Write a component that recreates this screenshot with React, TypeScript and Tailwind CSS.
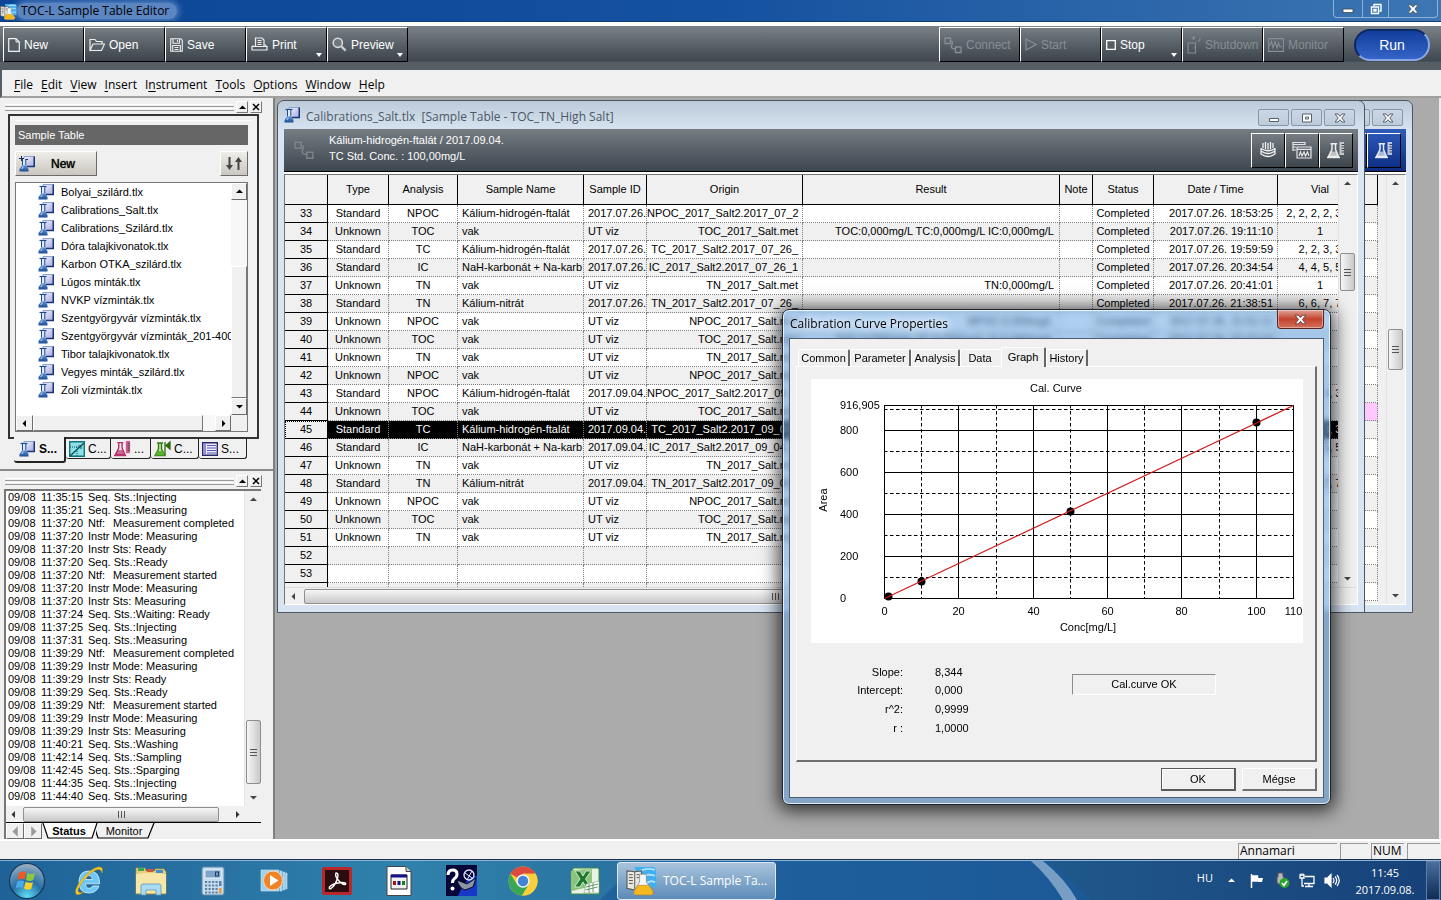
import { useState, type ReactNode } from "react";
import clsx from "clsx";

const SEGOE = "font-['Open_Sans','Noto_Sans',sans-serif]";

/* ---------- data ---------- */

type Row = { n: number; type?: string; an?: string; name?: string; id?: string; origin?: string; result?: string; status?: string; date?: string; vial?: string };

const ROWS: Row[] = [
  { n: 33, type: "Standard", an: "NPOC", name: "Kálium-hidrogén-ftalát", id: "2017.07.26.", origin: "NPOC_2017_Salt2.2017_07_2", status: "Completed", date: "2017.07.26. 18:53:25", vial: "2, 2, 2, 2, 3, 3" },
  { n: 34, type: "Unknown", an: "TOC", name: "vak", id: "UT viz", origin: "TOC_2017_Salt.met", result: "TOC:0,000mg/L TC:0,000mg/L IC:0,000mg/L", status: "Completed", date: "2017.07.26. 19:11:10", vial: "1" },
  { n: 35, type: "Standard", an: "TC", name: "Kálium-hidrogén-ftalát", id: "2017.07.26.", origin: "TC_2017_Salt2.2017_07_26_", status: "Completed", date: "2017.07.26. 19:59:59", vial: "2, 2, 3, 3" },
  { n: 36, type: "Standard", an: "IC", name: "NaH-karbonát + Na-karb", id: "2017.07.26.", origin: "IC_2017_Salt2.2017_07_26_1", status: "Completed", date: "2017.07.26. 20:34:54", vial: "4, 4, 5, 5" },
  { n: 37, type: "Unknown", an: "TN", name: "vak", id: "UT viz", origin: "TN_2017_Salt.met", result: "TN:0,000mg/L", status: "Completed", date: "2017.07.26. 20:41:01", vial: "1" },
  { n: 38, type: "Standard", an: "TN", name: "Kálium-nitrát", id: "2017.07.26.", origin: "TN_2017_Salt2.2017_07_26_", status: "Completed", date: "2017.07.26. 21:38:51", vial: "6, 6, 7, 7" },
  { n: 39, type: "Unknown", an: "NPOC", name: "vak", id: "UT viz", origin: "NPOC_2017_Salt.met", result: "NPOC:0,000mg/L", status: "Completed", date: "2017.07.26. 21:51:11" },
  { n: 40, type: "Unknown", an: "TOC", name: "vak", id: "UT viz", origin: "TOC_2017_Salt.met", result: "TOC:0,000mg/L TC:0,000mg/L IC:0,000mg/L", status: "Completed", date: "2017.07.26. 22:10:24" },
  { n: 41, type: "Unknown", an: "TN", name: "vak", id: "UT viz", origin: "TN_2017_Salt.met" },
  { n: 42, type: "Unknown", an: "NPOC", name: "vak", id: "UT viz", origin: "NPOC_2017_Salt.met" },
  { n: 43, type: "Standard", an: "NPOC", name: "Kálium-hidrogén-ftalát", id: "2017.09.04.", origin: "NPOC_2017_Salt2.2017_09_0", vial: "2, 2, 3, 3" },
  { n: 44, type: "Unknown", an: "TOC", name: "vak", id: "UT viz", origin: "TOC_2017_Salt.met" },
  { n: 45, type: "Standard", an: "TC", name: "Kálium-hidrogén-ftalát", id: "2017.09.04.", origin: "TC_2017_Salt2.2017_09_04_", vial: "2, 2, 3, 3" },
  { n: 46, type: "Standard", an: "IC", name: "NaH-karbonát + Na-karb", id: "2017.09.04.", origin: "IC_2017_Salt2.2017_09_04_1", vial: "4, 4, 5, 5" },
  { n: 47, type: "Unknown", an: "TN", name: "vak", id: "UT viz", origin: "TN_2017_Salt.met" },
  { n: 48, type: "Standard", an: "TN", name: "Kálium-nitrát", id: "2017.09.04.", origin: "TN_2017_Salt2.2017_09_04_", vial: "6, 6, 7, 7" },
  { n: 49, type: "Unknown", an: "NPOC", name: "vak", id: "UT viz", origin: "NPOC_2017_Salt.met" },
  { n: 50, type: "Unknown", an: "TOC", name: "vak", id: "UT viz", origin: "TOC_2017_Salt.met" },
  { n: 51, type: "Unknown", an: "TN", name: "vak", id: "UT viz", origin: "TN_2017_Salt.met" },
  { n: 52 },
  { n: 53 },
];

const FILES = [
  "Bolyai_szilárd.tlx", "Calibrations_Salt.tlx", "Calibrations_Szilárd.tlx", "Dóra talajkivonatok.tlx",
  "Karbon OTKA_szilárd.tlx", "Lúgos minták.tlx", "NVKP vízminták.tlx", "Szentgyörgyvár vízminták.tlx",
  "Szentgyörgyvár vízminták_201-400.tlx", "Tibor talajkivonatok.tlx", "Vegyes minták_szilárd.tlx", "Zoli vízminták.tlx",
];

const LOG: [string, string, string?][] = [
  ["11:35:15", "Seq. Sts.:Injecting"], ["11:35:21", "Seq. Sts.:Measuring"], ["11:37:20", "Ntf:", "Measurement completed"],
  ["11:37:20", "Instr Mode: Measuring"], ["11:37:20", "Instr Sts: Ready"], ["11:37:20", "Seq. Sts.:Ready"],
  ["11:37:20", "Ntf:", "Measurement started"], ["11:37:20", "Instr Mode: Measuring"], ["11:37:20", "Instr Sts: Measuring"],
  ["11:37:24", "Seq. Sts.:Waiting: Ready"], ["11:37:25", "Seq. Sts.:Injecting"], ["11:37:31", "Seq. Sts.:Measuring"],
  ["11:39:29", "Ntf:", "Measurement completed"], ["11:39:29", "Instr Mode: Measuring"], ["11:39:29", "Instr Sts: Ready"],
  ["11:39:29", "Seq. Sts.:Ready"], ["11:39:29", "Ntf:", "Measurement started"], ["11:39:29", "Instr Mode: Measuring"],
  ["11:39:29", "Instr Sts: Measuring"], ["11:40:21", "Seq. Sts.:Washing"], ["11:42:14", "Seq. Sts.:Sampling"],
  ["11:42:45", "Seq. Sts.:Sparging"], ["11:44:35", "Seq. Sts.:Injecting"], ["11:44:40", "Seq. Sts.:Measuring"],
];

/* ---------- small icons ---------- */

function FlaskDoc({ plus = false }: { plus?: boolean }) {
  return (
    <svg width="16" height="16" viewBox="0 0 16 16" className="shrink-0">
      <defs>
        <linearGradient id="fdA" x1="0" y1="0" x2="1" y2="1"><stop offset="0" stopColor="#f4f4ff" /><stop offset="1" stopColor="#a3a8dc" /></linearGradient>
        <linearGradient id="fdB" x1="0" y1="0" x2="0" y2="1"><stop offset="0" stopColor="#5f93d8" /><stop offset="1" stopColor="#1b4a90" /></linearGradient>
      </defs>
      <path d="M5 .5h10.500v10H5z" fill="url(#fdA)" stroke="#8ba5d6" />
      <path d="M15.300.500v10H8" fill="none" stroke="#1a3478" strokeWidth="1.600" />
      {plus ? <path d="M2.500 0v5M0 2.500h5M5 3.500h4" stroke="#1b2c55" /> : <path d="M1.500 2.500h7" stroke="#1d4c93" strokeWidth="1.200" />}
      <path d="M3.800 3v6.500h2.700V3z" fill="#dcebfa" />
      <path d="M3.500 3v6.500M6.800 3v6.500" stroke="#1d4c93" />
      <path d="M3.200 9.500h4L9.500 13v2.600H.5V13z" fill="url(#fdB)" />
      <path d="M2 12.500l2-2h1l-1.500 2.500z" fill="#a9caf3" />
    </svg>
  );
}

function BookFlask({ size = 18 }: { size?: number }) {
  return (
    <svg width={size} height={size} viewBox="0 0 32 32" className="shrink-0">
      <path d="M9 2h20l2 2v19H15z" fill="#3fb0ee" />
      <path d="M12 8q8-6 18-3M13 14q7-6 17-3M20 20q5-5 10-2" stroke="#a9e2ff" strokeWidth="2" fill="none" />
      <path d="M1 6l8 1 7-1v18l-7 2-8-2z" fill="#e9e7e0" stroke="#5b5b5b" strokeWidth="1.200" />
      <path d="M9 7v18M3 10h4M3 13h4M3 16h4M3 19h4M11 10h3M11 13h3" stroke="#555" />
      <path d="M14 9.500h7v8l6.500 9q1.500 4-2 4.500H10.500q-4-.5-2-4.500l5.500-9z" fill="#f4f6f8" stroke="#888" strokeWidth=".8" />
      <path d="M12.500 21h11l4.300 6q.8 3.500-2 3.800H10.500q-3-.3-2-3.800z" fill="#f4b91c" stroke="#b7820a" strokeWidth=".6" />
    </svg>
  );
}

function FlaskRuler({ color, ruler, w = 18 }: { color: string; ruler: string; w?: number }) {
  return (
    <svg width={w} height={w} viewBox="0 0 18 18" className="shrink-0">
      <path d="M3.500 2.800h6.500M5 3v5.500L1.500 15.500h10L8.500 8.500V3" fill="none" stroke={color} strokeWidth="1.500" />
      <path d="M4.500 10.500H9l2.500 5h-10z" fill={color} opacity=".7" />
      <path d="M0 16.500h13" stroke={color} strokeWidth="1.400" />
      <path d="M12.500 1H17v13h-4.500z" fill={ruler} opacity=".85" />
      <path d="M14.500 3.500H17M14.500 6H17M14.500 8.500H17M14.500 11H17" stroke="#3b434a" />
    </svg>
  );
}

function Nodes({ size = 18 }: { size?: number }) {
  return (
    <svg width={size} height={size} viewBox="0 0 18 18" fill="none" stroke="currentColor" strokeWidth="1.300">
      <path d="M1 2h5.500v5.500H1zM11.500 11H17v5.500h-5.500zM6.500 5q3 .5 1.500 3.500t.5 4l3 .8" />
    </svg>
  );
}

const TB = {
  New: <svg width="12" height="14" viewBox="0 0 12 14"><path d="M.7.7h7.300l3.300 3.300v9.300H.7z" fill="#555d65" stroke="#f2f2f2" strokeWidth="1.200" /><path d="M8 .7v3.300h3.300" stroke="#f2f2f2" fill="none" /></svg>,
  Open: <svg width="16" height="14" viewBox="0 0 16 14"><path d="M1 12.500V1.500h5l1.500 2H13v2.500M1 12.500L4 6h11.500l-3 6.500z" fill="#59616a" stroke="#eee" strokeWidth="1.200" /></svg>,
  Save: <svg width="13" height="14" viewBox="0 0 13 14"><path d="M.7.7h10l1.600 1.600v11H.7zM3 .7v4.500h6.500V.7M2.700 13.300V7.500h7.600v5.800M4.500 9.500h4M4.500 11.500h4M7.500 2v2" fill="none" stroke="#eee" strokeWidth="1.100" /></svg>,
  Print: <svg width="17" height="15" viewBox="0 0 17 15"><path d="M4.500 9.500V1h6.500l2 2v6.500M6.500 3.500h4M6.500 5.500h4M6.500 7.500h4M1 9.500h15v3.500H1zM2.500 8.500l-1 1M15.500 9.500l-1.500-2" fill="none" stroke="#eee" strokeWidth="1.200" /></svg>,
  Preview: <svg width="15" height="15" viewBox="0 0 15 15"><circle cx="5.800" cy="5.800" r="4.600" fill="#6f777f" stroke="#ddd" strokeWidth="1.500" /><path d="M9.300 9.300l4.400 4.400" stroke="#ccc" strokeWidth="2.400" /></svg>,
  Connect: <Nodes />,
  Start: <svg width="12" height="13" viewBox="0 0 12 13"><path d="M1 1l10 5.500L1 12z" fill="none" stroke="currentColor" strokeWidth="1.200" /></svg>,
  Stop: <svg width="10" height="10" viewBox="0 0 10 10"><path d="M.7.700h8.600v8.600H.7z" fill="#555d65" stroke="#fff" strokeWidth="1.300" /></svg>,
  Shutdown: <svg width="14" height="19" viewBox="0 0 14 19" fill="none" stroke="currentColor" strokeWidth="1.100"><path d="M1 8h7.500v10H1zM6.500 13h1M6.500 1v4M4.500 3h4" /><path d="M12.500 1q1.500 4-3.500 6 4.500 0 4.500-3.500z" fill="currentColor" stroke="none" /></svg>,
  Monitor: <svg width="16" height="14" viewBox="0 0 16 14" fill="none" stroke="currentColor" strokeWidth="1.100"><path d="M.6.6h14.800v12.800H.6zM1.500 8l2-4.500L5 10l2-6.500L9 10l1.500-5L12 9l2-1" /></svg>,
};

/* ---------- chrome pieces ---------- */

function ToolButton({ name, dim, arrow }: { name: keyof typeof TB; dim?: boolean; arrow?: boolean }) {
  return (
    <button
      disabled={dim}
      className={clsx(
        "relative flex h-[35px] w-[81px] shrink-0 items-center gap-1 border-t border-r border-b border-l border-t-white border-r-black border-b-black border-l-white bg-linear-to-b from-[#767e84] to-[#3c444c] pl-1 text-xs",
        dim ? "text-[#878f94]" : "text-white",
      )}
    >
      {TB[name]}
      {name}
      {arrow ? <span className="absolute right-1 bottom-1 border-x-[3px] border-t-4 border-x-transparent border-t-white" /> : null}
    </button>
  );
}

function Arrow({ dir, className }: { dir: "up" | "down" | "left" | "right"; className?: string }) {
  const d = { up: "M1 6h7L4.500 2.500z", down: "M1 3h7L4.500 6.500z", left: "M6 1v7L2.500 4.500z", right: "M3 1v7l3.500-3.500z" }[dir];
  return <svg width="9" height="9" viewBox="0 0 9 9" className={clsx("shrink-0", className)}><path d={d} fill="currentColor" /></svg>;
}

// Aero-style scroll bars; the caller gives the thumb's place and length.
function VScroll({ thumb, className }: { thumb: string; className?: string }) {
  return (
    <div className={clsx("flex w-[17px] shrink-0 flex-col items-center justify-between border-l border-[#e4e4e4] bg-[#f0f0f0] py-1 text-[#444]", className)}>
      <Arrow dir="up" />
      <div className="flex w-full flex-1 flex-col items-center">
        <div className={clsx("flex w-[15px] flex-col items-center justify-center gap-[2px] rounded-[2px] border border-[#8f8f8f] bg-linear-to-r from-[#f6f6f6] to-[#c9c9cb]", thumb)}>
          <i className="h-px w-[7px] bg-[#555]" /><i className="h-px w-[7px] bg-[#555]" /><i className="h-px w-[7px] bg-[#555]" />
        </div>
      </div>
      <Arrow dir="down" />
    </div>
  );
}

function HThumb({ className }: { className: string }) {
  return (
    <div className={clsx("flex h-[15px] items-center justify-center gap-[2px] rounded-[2px] border border-[#8f8f8f] bg-linear-to-b from-[#f6f6f6] to-[#c9c9cb]", className)}>
      <i className="h-[7px] w-px bg-[#555]" /><i className="h-[7px] w-px bg-[#555]" /><i className="h-[7px] w-px bg-[#555]" />
    </div>
  );
}

function Gripper() {
  return (
    <div className="flex h-[14px] items-center gap-[2px] pr-[11px] pl-[5px]">
      <div className="flex flex-1 flex-col gap-px">
        <i className="h-[3px] border-t border-b border-t-white border-b-[#9a9a9a]" />
        <i className="h-[3px] border-t border-b border-t-white border-b-[#9a9a9a]" />
      </div>
      <button aria-label="Collapse" className="flex h-3 w-3 items-center justify-center border border-t-white border-r-[#777] border-b-[#777] border-l-white"><Arrow dir="up" /></button>
      <button aria-label="Close" className="flex h-3 w-3 items-center justify-center border border-t-white border-r-[#777] border-b-[#777] border-l-white">
        <svg width="8" height="8" viewBox="0 0 8 8"><path d="M1 1l6 6M7 1L1 7" stroke="#000" strokeWidth="1.500" /></svg>
      </button>
    </div>
  );
}

function Raised({ children, className, label }: { children?: ReactNode; className?: string; label?: string }) {
  return (
    <button aria-label={label} className={clsx("flex items-center border border-t-white border-r-[#6b6b6b] border-b-[#6b6b6b] border-l-white", className)}>{children}</button>
  );
}

/* ---------- left dock ---------- */

const DOCK_TABS: { label: string; icon: ReactNode; w: string }[] = [
  { label: "C...", w: "w-[45px]", icon: <svg width="16" height="16" viewBox="0 0 16 16"><path d="M.7.700h14.600v14.600H.7z" fill="#8fe0e6" stroke="#11737d" strokeWidth="1.400" /><path d="M1 15L15 2" stroke="#0d5560" strokeWidth="1.500" /><path d="M1 6h7M8 6v9" stroke="#0d5560" strokeDasharray="1 1" /><path d="M9 5h3v3" stroke="#0d5560" fill="none" /></svg> },
  { label: "...", w: "w-[40px]", icon: <FlaskRuler color="#b5326e" ruler="#d0447f" w={17} /> },
  { label: "C...", w: "w-[48px]", icon: <svg width="17" height="18" viewBox="0 0 17 18"><path d="M3 3h6M4.500 3v6L1 15.500h10L7.500 9V3" fill="#c8eaa4" stroke="#2f7d14" strokeWidth="1.400" /><path d="M3 11h6l2 4.500H1z" fill="#5cb02c" /><path d="M11 2v13M16 2v7l-4-3.500z" fill="#2b6b12" stroke="#2b6b12" strokeWidth="1.300" /></svg> },
  { label: "S...", w: "w-[48px]", icon: <svg width="16" height="14" viewBox="0 0 16 14"><path d="M.7.700h14.600v12.600H.7z" fill="#eceafb" stroke="#28286c" strokeWidth="1.400" /><path d="M1.400 1.400h2.600v11.200H1.400z" fill="#8f8fd0" /><path d="M5 3.500h9M5 6h9M5 8.500h9M5 11h9" stroke="#5a5ab0" /></svg> },
];

function SampleTableDock() {
  return (
    <section className="flex flex-col pt-[2px]">
      <Gripper />
      <div className="mr-[14px] ml-2 border-2 border-[#333] px-[5px] pt-1 pb-[5px]">
        <div className="border-t border-white" />
        <h2 className="mt-1 mr-1 flex h-5 items-center bg-[#666] pl-[3px] text-[11px] text-white">Sample Table</h2>
        <div className="mt-[6px] mr-1 flex justify-between">
          <Raised className="h-[25px] w-[82px] bg-linear-to-b from-[#efede8] to-[#c9c7bf] pl-[3px] text-xs [text-shadow:0_0_1px_#000]">
            <FlaskDoc plus /><span className="ml-4">New</span>
          </Raised>
          <Raised label="Sort" className="h-[25px] w-[28px] justify-center bg-linear-to-b from-[#efede8] to-[#c9c7bf]">
            <svg width="18" height="15" viewBox="0 0 18 15" fill="#444"><path d="M3.500 1h2v8h2.500l-3.500 5L1 9h2.500zM12.500 14h2V6H17l-3.500-5L10 6h2.500z" /></svg>
          </Raised>
        </div>
        <div className="mt-[6px] mr-1 border border-[#777]">
          <div className="flex h-[232px] bg-white">
            <ul className="min-w-0 flex-1 overflow-hidden text-[11px] text-black">
              {FILES.map((f) => (
                <li key={f} className="flex h-[18px] items-center gap-[7px] pl-[22px] whitespace-nowrap"><FlaskDoc />{f}</li>
              ))}
            </ul>
            <div className="flex w-4 flex-col bg-[#f7f7f7]">
              <Raised label="Up" className="h-[17px] justify-center bg-[#f0f0f0]"><Arrow dir="up" /></Raised>
              <div className="mt-[66px] flex-1 border border-t-white border-r-[#777] border-b-[#777] border-l-white bg-[#f0f0f0]" />
              <Raised label="Down" className="h-[17px] justify-center bg-[#f0f0f0]"><Arrow dir="down" /></Raised>
            </div>
          </div>
          <div className="flex h-4 bg-[#f7f7f7]">
            <Raised label="Left" className="w-[17px] justify-center bg-[#f0f0f0]"><Arrow dir="left" /></Raised>
            <div className="w-[170px] border border-t-white border-r-[#777] border-b-[#777] border-l-white bg-[#f0f0f0]" />
            <div className="flex-1" />
            <Raised label="Right" className="w-4 justify-center bg-[#f0f0f0]"><Arrow dir="right" /></Raised>
            <div className="w-4 bg-[#f0f0f0]" />
          </div>
        </div>
      </div>
      <div className="relative z-10 -mt-[2px] flex items-start pl-[14px] text-xs">
        <button className="flex h-[26px] w-[52px] items-center gap-1 rounded-b-[3px] border-r-2 border-b-2 border-[#222] bg-[#f0f0f0] pl-[5px] font-bold"><FlaskDoc />S...</button>
        {DOCK_TABS.map((t, i) => (
          <button key={i} className={clsx("mt-[2px] flex h-[20px] items-center gap-[3px] rounded-b-[3px] border-r border-b border-[#222] bg-[#f0f0f0] pl-[3px]", t.w)}>{t.icon}{t.label}</button>
        ))}
      </div>
    </section>
  );
}

function StatusDock() {
  return (
    <section className="mt-[6px] flex min-h-0 flex-1 flex-col border-t-2 border-[#8a8a8a] pt-[3px]">
      <Gripper />
      <div className="mt-[1px] mr-3 ml-1 flex min-h-0 flex-1 flex-col border-t-2 border-l-2 border-[#777]">
        <div className="flex min-h-0 flex-1 bg-white">
          <ul className="flex-1 overflow-hidden pl-[2px] text-[11px] leading-[13px] text-black">
            {LOG.map(([time, text, extra], i) => (
              <li key={i} className="flex whitespace-nowrap">
                <span className="w-[33px]">09/08</span>
                <span className="w-[47px]">{time}</span>
                <span className={extra ? "w-[25px]" : undefined}>{text}</span>
                {extra}
              </li>
            ))}
          </ul>
          <VScroll thumb="mt-[216px] h-[64px]" />
        </div>
        <div className="flex h-4 items-center bg-[#f0f0f0] px-[3px] text-[#333]">
          <Arrow dir="left" /><HThumb className="ml-[5px] w-[196px]" /><Arrow dir="right" className="ml-[14px]" />
        </div>
        <div className="flex h-[17px] items-stretch border-t border-black">
          <Raised label="Previous" className="w-[18px] justify-center text-[#999]"><Arrow dir="left" className="scale-150" /></Raised>
          <Raised label="Next" className="w-[18px] justify-center text-[#999]"><Arrow dir="right" className="scale-150" /></Raised>
          <button className="relative flex w-[54px] items-center justify-center text-[11px] font-bold">
            <svg className="absolute inset-0" width="56" height="16" viewBox="0 0 56 16"><path d="M1 0l5 15h44l5-15" fill="#fff" stroke="#000" strokeWidth="1.200" /></svg>
            <span className="relative">Status</span>
          </button>
          <button className="relative flex w-[56px] items-center justify-center text-[11px]">
            <svg className="absolute inset-0" width="60" height="16" viewBox="0 0 60 16"><path d="M-2 3l4 12h50l6-15" fill="none" stroke="#000" strokeWidth="1.200" /></svg>
            <span className="relative">Monitor</span>
          </button>
        </div>
      </div>
    </section>
  );
}

/* ---------- MDI windows ---------- */

function WinButton({ label, children }: { label: string; children: ReactNode }) {
  return (
    <button aria-label={label} className="flex h-[17px] w-[31px] items-center justify-center rounded-[2px] border border-[#8996a6] bg-linear-to-b from-[#cbd7e5] to-[#bccbdc]">
      <svg width="12" height="10" viewBox="0 0 12 10" fill="#fff" stroke="#555e6b">{children}</svg>
    </button>
  );
}

function WinFrame({ title, bar, children, className }: { title?: string; bar: ReactNode; children: ReactNode; className: string }) {
  return (
    <div className={clsx("absolute top-[2px] flex h-[513px] w-[1088px] flex-col rounded-t-[7px] border border-[#4d5763] bg-linear-to-b from-[#bccbda] via-[#d8e4f1] via-[6%] to-[#d8e4f1] px-[6px] pb-[7px]", className)}>
      <div className="flex h-7 shrink-0 items-center gap-[2px]">
        {title ? <FlaskDoc /> : null}
        <span className={clsx("ml-1 flex-1 pt-1 text-xs whitespace-pre text-[#4b5665]", SEGOE)}>{title}</span>
        <div className="flex gap-[2px] pt-[5px] pr-[3px]">
          <WinButton label="Minimize"><path d="M1.500 5.500h9v3h-9z" /></WinButton>
          <WinButton label="Restore"><path d="M1.500 1h9v8h-9zM4.500 4h3v2h-3z" /></WinButton>
          <WinButton label="Close window"><path d="M1 1h3l2 2.300L8 1h3L7.800 5 11 9H8L6 6.700 4 9H1l3.200-4z" /></WinButton>
        </div>
      </div>
      {bar}
      <div className="min-h-0 flex-1 border-t-2 border-white">
        <div className="flex h-full flex-col border-t border-r border-b border-l border-t-[#777] border-r-white border-b-white border-l-[#777] bg-[#f0f0f0]">{children}</div>
      </div>
    </div>
  );
}

function BarButton({ label, blue, children }: { label: string; blue?: boolean; children: ReactNode }) {
  return (
    <button aria-label={label} className={clsx("flex h-[35px] w-[34px] items-center justify-center border border-t-white border-r-black border-b-black border-l-white bg-linear-to-b", blue ? "from-[#2a56b5] to-[#0f2f86]" : "from-[#767e84] to-[#3c444c]")}>{children}</button>
  );
}

const HEADS = ["", "Type", "Analysis", "Sample Name", "Sample ID", "Origin", "Result", "Note", "Status", "Date / Time", "Vial"];
const COLS = ["w-[43px]", "w-[61px]", "w-[69px]", "w-[126px]", "w-[63px]", "w-[156px]", "w-[257px]", "w-[33px]", "w-[61px]", "w-[124px]", "w-[85px]"];

function SampleGrid() {
  const [selected, setSelected] = useState(45);
  return (
    <table className="w-[1078px] table-fixed border-separate border-spacing-0 text-[11px] leading-[17px] whitespace-nowrap text-black">
      <colgroup>{COLS.map((c, i) => <col key={i} className={c} />)}</colgroup>
      <thead>
        <tr className="h-[30px]">
          {HEADS.map((h, i) => <th key={i} className="border-r border-b border-black bg-[#f0f0f0] p-0 font-normal">{h}</th>)}
        </tr>
      </thead>
      <tbody>
        {ROWS.map((r, i) => {
          const sel = r.n === selected;
          const cell = "h-[18px] overflow-hidden border-r border-b border-dotted border-[#808080] p-0";
          return (
            <tr key={r.n} onClick={() => setSelected(r.n)} className={sel ? "bg-black text-white" : i % 2 ? "bg-[#f0f0f0]" : "bg-white"}>
              <th className={clsx("h-[18px] border-r border-b border-black bg-[#f0f0f0] p-0 font-normal text-black", sel && "outline-1 -outline-offset-1 outline-black outline-dotted")}>{r.n}</th>
              <td className={clsx(cell, "text-center")}>{r.type}</td>
              <td className={clsx(cell, "text-center")}>{r.an}</td>
              <td className={clsx(cell, "pl-1")}>{r.name}</td>
              <td className={clsx(cell, "pl-1")}>{r.id}</td>
              <td className={clsx(cell, "pr-1 text-right")}>{r.origin}</td>
              <td className={clsx(cell, "pr-[5px] text-right")}>{r.result}</td>
              <td className={cell} />
              <td className={clsx(cell, "text-center")}>{r.status}</td>
              <td className={clsx(cell, "pr-1 text-right")}>{r.date}</td>
              <td className={clsx(cell, "text-center")}>{r.vial}</td>
            </tr>
          );
        })}
        <tr className="bg-[#f0f0f0]">
          {HEADS.map((_, i) => <td key={i} className={clsx("h-[18px] border-r p-0", i ? "border-dotted border-[#808080]" : "border-black")} />)}
        </tr>
      </tbody>
    </table>
  );
}

function BackWindow() {
  return (
    <WinFrame
      className="left-[50px]"
      bar={
        <div className="flex h-[43px] shrink-0 items-center justify-end border-b border-black bg-linear-to-b from-[#2f5cb8] to-[#0f2d80] pr-[5px]">
          <BarButton blue label="Chart"><span /></BarButton>
          <BarButton blue label="Sample"><FlaskRuler color="#e6ecfa" ruler="#cfd9f2" /></BarButton>
        </div>
      }
    >
      <div className="flex min-h-0 flex-1">
        <div className="flex-1 overflow-hidden">
          <div className="mr-2 flex h-full flex-col">
            <div className="h-[30px] shrink-0 border-r border-b border-black" />
            {Array.from({ length: 22 }, (_, i) => (
              <div key={i} className={clsx("h-[18px] shrink-0 border-r border-b border-dotted border-[#808080]", i === 11 ? "bg-[#ffc8ff]" : i % 2 ? "bg-white" : "bg-[#f0f0f0]")} />
            ))}
          </div>
        </div>
        <VScroll className="mr-[2px]" thumb="mt-[141px] h-[41px]" />
      </div>
    </WinFrame>
  );
}

function MainWindow() {
  return (
    <WinFrame
      className="left-[2px]"
      title="Calibrations_Salt.tlx  [Sample Table - TOC_TN_High Salt]"
      bar={
        <div className="flex h-[43px] shrink-0 items-center border-b border-black bg-linear-to-b from-[#757d83] to-[#3e474f] pr-[5px] pl-[10px] text-[#7c8489]">
          <Nodes size={20} />
          <p className="ml-[15px] flex-1 pb-1 text-[11px] leading-4 text-white">Kálium-hidrogén-ftalát / 2017.09.04.<br />TC Std. Conc. : 100,00mg/L</p>
          <BarButton label="Turntable">
            <svg width="18" height="18" viewBox="0 0 18 18" fill="none" stroke="#f0f0f0" strokeWidth="1.300"><path d="M2 7v6q7 5 14 0V7M2 10q7 5 14 0M2 7.500q7 4.500 14 0M4 2v5M6.500 1v7M9 2v6.500M11.500 1v7M14 2v5" /></svg>
          </BarButton>
          <BarButton label="Graphs">
            <svg width="20" height="18" viewBox="0 0 20 18" fill="none" stroke="#e6e6e6" strokeWidth="1.200"><path d="M1 10V1.500h12v2H1M1 6h3M1 9h3M5 6h14v11H5zM5 8.300h14M7 15l1.500-4 1.500 4 2-4 1.500 4 2-4 1.500 4" /></svg>
          </BarButton>
          <BarButton label="Sample"><FlaskRuler color="#eee" ruler="#d8d8d8" /></BarButton>
        </div>
      }
    >
      <div className="flex min-h-0 flex-1">
        <div className="min-w-0 flex-1 overflow-hidden"><SampleGrid /></div>
        <VScroll className="mr-[2px]" thumb="mt-[65px] h-[38px]" />
      </div>
      <div className="flex h-[17px] items-center border-t border-[#ddd] pl-1 text-[#444]">
        <Arrow dir="left" /><HThumb className="ml-[6px] w-[942px]" />
      </div>
    </WinFrame>
  );
}

/* ---------- calibration dialog ---------- */

const X0 = 73, X1 = 482, Y0 = 219, Y1 = 26;
const px = (v: number) => Math.round(X0 + (v / 110) * (X1 - X0)) + 0.5;
const py = (v: number) => Math.round(Y0 - (v / 916.905) * (Y0 - Y1)) + 0.5;

function CalChart() {
  return (
    <svg width="492" height="264" viewBox="0 0 492 264" className="bg-white" fontSize="11" fill="#000">
      <g stroke="#000" strokeDasharray="3.500 2.500">
        {[10, 30, 50, 70, 90].map((v) => <path key={v} d={`M${px(v)} ${Y1}V${Y0}`} />)}
        {[100, 300, 500, 700, 900].map((v) => <path key={v} d={`M${X0} ${py(v)}H${X1}`} />)}
      </g>
      <g stroke="#000" fill="none">
        {[0, 20, 40, 60, 80, 100, 110].map((v) => <path key={v} d={`M${px(v)} ${Y1}V${Y0 + 1}`} />)}
        {[0, 200, 400, 600, 800, 916.905].map((v) => <path key={v} d={`M${X0} ${py(v)}H${X1 + 1}`} />)}
      </g>
      {[[1, 8], [10, 83], [50, 415], [100, 838]].map(([x, y]) => <circle key={x} cx={px(x)} cy={py(y)} r="4" />)}
      <path d={`M${px(0)} ${py(0)}L${px(110)} ${py(916.905)}`} stroke="#d01818" strokeWidth="1.200" />
      <text x="245" y="13" textAnchor="middle">Cal. Curve</text>
      <text x="277" y="252" textAnchor="middle">Conc[mg/L]</text>
      <text transform="translate(16 121) rotate(-90)" textAnchor="middle">Area</text>
      <text x="29" y="30">916,905</text>
      {[0, 200, 400, 600, 800].map((v) => <text key={v} x="29" y={py(v) + 3.5}>{v}</text>)}
      {[0, 20, 40, 60, 80, 100, 110].map((v) => <text key={v} x={px(v)} y="236" textAnchor="middle">{v}</text>)}
    </svg>
  );
}

const TABS = [
  { t: "Common", w: "w-[52px]" }, { t: "Parameter", w: "w-[61px]" }, { t: "Analysis", w: "w-[49px]" },
  { t: "Data", w: "w-[41px]" }, { t: "Graph", w: "w-[45px]" }, { t: "History", w: "w-[42px]" },
];

const STATS = [["Slope:", "8,344"], ["Intercept:", "0,000"], ["r^2:", "0,9999"], ["r :", "1,0000"]];

function CalDialog() {
  return (
    <div role="dialog" aria-label="Calibration Curve Properties" className="absolute top-[211px] left-[507px] w-[549px] rounded-[7px] border border-[#1d2630] bg-[rgb(95_160_226/0.5)] px-[6px] pb-[6px] shadow-[0_2px_18px_4px_rgb(0_0_0/0.7),inset_0_0_0_1px_rgb(255_255_255/0.75)] backdrop-blur-[3px]">
      <div className="flex h-7 items-start justify-between">
        <h2 className={clsx("mt-1 pl-[1px] text-xs leading-5 text-black [text-shadow:0_0_6px_#fff,0_0_8px_#fff]", SEGOE)}>Calibration Curve Properties</h2>
        <button aria-label="Close" className="flex h-[19px] w-[47px] items-center justify-center rounded-b-[4px] border border-t-0 border-[#5b2420] bg-linear-to-b from-[#dfa297] via-[#c2412c] via-50% to-[#d5705c] shadow-[inset_0_0_0_1px_rgb(255_255_255/0.4)]">
          <svg width="13" height="11" viewBox="0 0 12 10" fill="#fff" stroke="#5a3a3a" strokeWidth=".8"><path d="M1 1h3l2 2.300L8 1h3L7.800 5 11 9H8L6 6.700 4 9H1l3.200-4z" /></svg>
        </button>
      </div>
      <div className="border border-[#4b5e75] bg-[#f0f0f0] px-[6px] pt-2 pb-[6px] text-[11px] text-black">
        <div role="tablist" className="flex h-[19px] items-end pl-[2px]">
          {TABS.map(({ t, w }) => (
            <button
              key={t}
              role="tab"
              aria-selected={t === "Graph"}
              className={clsx(
                "flex items-center justify-center rounded-t-[2px] border-t border-r-2 border-l border-t-white border-r-[#666] border-l-white bg-[#f0f0f0]",
                t === "Graph" ? "relative z-10 -mb-px h-5" : "h-[17px]",
                t === "Data" && "border-r-transparent",
                w,
              )}
            >
              {t}
            </button>
          ))}
        </div>
        <div className="border-t border-r-2 border-b-2 border-l border-t-white border-r-[#6f6f6f] border-b-[#6f6f6f] border-l-white px-[14px] pt-3">
          <CalChart />
          <div className="flex h-[117px] pt-5">
            <dl className="grid w-[250px] grid-cols-[92px_1fr] grid-rows-[18px_18px_20px_18px] gap-x-8">
              {STATS.map(([k, v]) => [
                <dt key={k} className="flex items-center justify-end">{k}</dt>,
                <dd key={v} className="flex items-center">{v}</dd>,
              ])}
            </dl>
            <output className="mt-[11px] ml-[11px] flex h-[21px] w-36 items-center justify-center border border-t-[#8c8c8c] border-r-white border-b-white border-l-[#8c8c8c]">Cal.curve OK</output>
          </div>
        </div>
        <div className="mt-[6px] flex justify-end gap-[6px]">
          <button className="h-[23px] w-[75px] border border-r-2 border-b-2 border-[#5a5a5a] shadow-[inset_1px_1px_0_#fff]">OK</button>
          <button className="h-[23px] w-[75px] border border-r-2 border-b-2 border-t-white border-r-[#707070] border-b-[#707070] border-l-white">Mégse</button>
        </div>
      </div>
    </div>
  );
}

/* ---------- Windows taskbar ---------- */

const PINNED: { label: string; icon: ReactNode }[] = [
  { label: "Internet Explorer", icon: <svg width="32" height="32" viewBox="0 0 32 32"><path d="M26 21q-2.500 7-10 7-10 0-10-11T16 6q10.800 0 10.600 12.800H12.500q.3 4.500 3.800 4.500 2.500 0 3.200-2.300zM12.500 14.500h7q-.3-4-3.500-4t-3.500 4z" fill="#6fc8f5" stroke="#d9f3ff" strokeWidth=".8" /><path d="M3.500 29.500Q0 26 8 15.500 17 4 25 2q6-1 4 6-.5-4-4.500-3.500Q18 6 10.500 15.500 4.500 23.500 5 26.500q1 2 6 .5-5 3.500-7.500 2.500z" fill="#f7c928" stroke="#c18f0c" strokeWidth=".5" /></svg> },
  { label: "Explorer", icon: <svg width="34" height="32" viewBox="0 0 34 32"><path d="M2 6V3h9l1 3h9V4h9l2 3v22H2z" fill="#e9cf7d" stroke="#b59236" strokeWidth=".7" /><path d="M4 3h6v3H4z" fill="#35a65a" /><path d="M13 4h6v3h-6z" fill="#d4553e" /><path d="M22 5h7v3h-7z" fill="#3b8ed0" /><path d="M2 9q14-2 30 0v19H2z" fill="#f6e6a8" /><path d="M7 30V21q0-2 2-2h16q2 0 2 2v9h-5v-5H12v5z" fill="#a9dcf2" stroke="#5599bd" strokeWidth=".8" /></svg> },
  { label: "Calculator", icon: <svg width="24" height="30" viewBox="0 0 24 30"><rect x="1" y="1" width="22" height="28" rx="2" fill="#c6dcef" stroke="#5f86ab" /><path d="M4 4h16v8H4z" fill="#7fa4c9" stroke="#e3eef8" /><rect x="14.500" y="6" width="3" height="4" fill="none" stroke="#1e3a5a" /><g fill="#5f80a4">{[15, 18.500, 22, 25.500].map((y) => [4, 7.500, 11, 14.500].map((x) => <rect key={`${x}${y}`} x={x} y={y} width="2.200" height="2" />))}</g><path d="M18 15h2.500v5H18z" fill="#5f80a4" /><path d="M18 22h2.500v5.500H18z" fill="#e89a33" /></svg> },
  { label: "Media Player", icon: <svg width="30" height="28" viewBox="0 0 30 28"><path d="M1 3h18v21H1zM20 4h2v20h-2zM23 5h1.500v18H23zM25.500 6h1.500v16h-1.500z" fill="#9fd0ec" stroke="#cfeaf8" strokeWidth=".6" /><circle cx="13" cy="13.500" r="9.500" fill="#f08228" stroke="#fbd7b4" /><path d="M10 8l8.500 5.500L10 19z" fill="#fff" /></svg> },
  { label: "Acrobat Reader", icon: <svg width="30" height="28" viewBox="0 0 30 28"><rect width="30" height="28" rx="2" fill="#b8272a" /><path d="M3 3h24v22H3z" fill="#2a0d0e" /><path d="M14 6q3 0 1.500 5-2 7-6.500 10.500-2.500 1-1.500-1.500 3-4 12.500-4.500 4.500 0 3.500 1.800-2.500 1-6.500-3.300Q12.500 9 14 6z" fill="none" stroke="#fff" strokeWidth="1.400" /></svg> },
  { label: "Document", icon: <svg width="26" height="30" viewBox="0 0 26 30"><path d="M1 .5h19l5 5v24H1z" fill="#fff" stroke="#444" /><path d="M20 .5v5h5" fill="#ccc" stroke="#444" /><path d="M5 9h16v14H5z" fill="#f2f2f2" stroke="#222" /><path d="M5 8.500h16v3H5z" fill="#12128a" /><path d="M7 15h3v4H7z" fill="#a11" /><path d="M11.500 15h3v4h-3z" fill="#118" /><path d="M16 15h3v4h-3z" fill="#181" /></svg> },
  { label: "Help", icon: <svg width="31" height="31" viewBox="0 0 31 31"><path d="M0 0h31v31H0z" fill="#05053a" /><path d="M12 31q8-20 19-20v20z" fill="#1637c8" /><path d="M2 10q0-5 4.500-5t4.500 4q0 3-2.500 4.500-2 1.500-2 4.500" fill="none" stroke="#fff" strokeWidth="3" /><circle cx="6.500" cy="23.500" r="2" fill="#fff" /><circle cx="23" cy="10" r="5" fill="none" stroke="#dfe8ff" strokeWidth="1.300" /><path d="M19 8l7 5M26 6l-5 9" stroke="#dfe8ff" /><path d="M11 15l10 4 9-6-3 9-8 3q-6-2-8-10z" fill="#8a96a6" stroke="#0a0a20" /></svg> },
  { label: "Chrome", icon: <svg width="30" height="30" viewBox="0 0 30 30"><circle cx="15" cy="15" r="14.500" fill="#f9cf3b" /><path d="M15 15L2.400 7.800A14.500 14.500 0 0 1 27.600 7.800H15z" fill="#dc4a3d" /><path d="M2.400 7.800A14.500 14.500 0 0 0 14 29.500L21.200 18 15 15 8.800 18z" fill="#3aa757" /><path d="M27.600 7.800H15L21.200 18 14.200 29.500A14.500 14.500 0 0 0 27.600 7.800z" fill="#f9cf3b" /><circle cx="15" cy="15" r="6.700" fill="#f4f6f8" /><circle cx="15" cy="15" r="5.200" fill="#4285d8" /></svg> },
  { label: "Excel", icon: <svg width="30" height="28" viewBox="0 0 30 28"><path d="M4 1h24l1 1v25H1V4z" fill="#e9f3e4" stroke="#3b8c45" /><path d="M2 3l20-1v17L2 24z" fill="#8cc47e" /><path d="M5 4h5l3 5 3-5h5l-5.500 8 5.500 8h-5l-3-5-3 5H4.500L10 12z" fill="#1f7a30" stroke="#e9f5e4" strokeWidth=".8" /><path d="M16 17l13-3v12H14z" fill="#fafafa" stroke="#7aa67a" strokeWidth=".6" /><path d="M16 20l12-3M15.500 23l12-3M19 17v9M23 16v9" stroke="#6b9c6b" /></svg> },
];

function Taskbar() {
  return (
    <footer className="relative flex h-10 shrink-0 items-center border-t border-[#8fb3d4] bg-linear-to-r from-[#1f6297] via-[#3081ac] via-[28%] to-[#174178] shadow-[0_-1px_0_#16324f]">
      <svg className="absolute inset-0 h-full w-full" viewBox="0 0 1441 40" preserveAspectRatio="none">
        <path d="M640 0h410l40 40H600z" fill="#1b5b9c" opacity=".7" />
        <path d="M1031 0h12q22 18 34 40h-14q-14-24-32-40z" fill="#b5cbe2" opacity=".6" />
      </svg>
      <button aria-label="Start" className="relative ml-2 w-[50px]">
        <svg width="38" height="38" viewBox="0 0 38 38">
          <defs><radialGradient id="orb" cx=".5" cy=".95" r=".9"><stop offset="0" stopColor="#5fe0f5" /><stop offset=".5" stopColor="#2670a6" /><stop offset="1" stopColor="#93aabf" /></radialGradient></defs>
          <circle cx="19" cy="19" r="17.500" fill="url(#orb)" stroke="#12365a" strokeWidth="1.200" />
          <path d="M11 11q4-2.500 7-.5l-1.500 7q-3.500-1.500-7 .3z" fill="#ee5a24" />
          <path d="M19.500 11q4 2 7.500 0l-1.700 7q-3.500 2-7.300 0z" fill="#8ccc3c" />
          <path d="M9.200 19.500q3.500-2 7-.2L14.600 26q-3.500-1.500-7 .5z" fill="#4aa8ec" />
          <path d="M17.700 19.800q4 2 7.300.2l-1.700 6.700q-3.500 2-7.300-.2z" fill="#fbd028" />
        </svg>
      </button>
      {PINNED.map((p) => <button key={p.label} aria-label={p.label} className="relative flex w-[62px] items-center justify-center">{p.icon}</button>)}
      <button className={clsx("relative ml-[1px] flex h-[38px] w-[159px] items-center gap-[6px] rounded-[3px] border border-[#dce9f5] bg-linear-to-b from-[#a9c3dc] to-[#5c8cb8] pl-2 text-xs text-white", SEGOE)}>
        <BookFlask size={31} />TOC-L Sample Ta...
      </button>
      <div className={clsx("relative ml-auto flex items-center self-stretch text-xs text-white", SEGOE)}>
        <span className="mr-[14px] mb-1 text-[11px]">HU</span>
        <Arrow dir="up" className="mr-[14px]" />
        <svg className="mr-[10px]" width="14" height="16" viewBox="0 0 14 16"><path d="M1.500 1v14M2.500 3h5v5h-5z" stroke="#fff" strokeWidth="1.500" fill="#fff" /><path d="M8 5h5l-1 4H8z" fill="#fff" /></svg>
        <svg className="mr-[9px]" width="16" height="17" viewBox="0 0 16 17"><path d="M4 1h5v4h1v6q-3.500 3-7 0V5h1z" fill="#b5b9bd" stroke="#555" /><circle cx="10.500" cy="11" r="5" fill="#2ca52c" /><path d="M8 11l2 2.500L13 9" stroke="#fff" strokeWidth="1.600" fill="none" /></svg>
        <svg className="mr-[9px]" width="16" height="15" viewBox="0 0 16 15" fill="none" stroke="#fff" strokeWidth="1.300"><path d="M6 3.500h9v7H5M10 10.500V13M6 13.500h8M1 2h4v3H1zM3 5v8h2M2 2V.5M4 2V.5" /></svg>
        <svg className="mr-[13px]" width="16" height="15" viewBox="0 0 16 15" fill="none" stroke="#fff" strokeWidth="1.200"><path d="M1 5h2.500L7 1.500v12L3.500 10H1z" fill="#fff" /><path d="M9 5q2 2.500 0 5M11 3.500q3.500 4 0 8M13 2q4.500 5.500 0 11" /></svg>
        <time className="w-[64px] text-center text-[11px] leading-[17px]">11:45<br />2017.09.08.</time>
        <button aria-label="Show desktop" className="mr-[1px] ml-[9px] h-full w-[14px] border border-[#5f7ea5] bg-linear-to-b from-[#4a6f9c] to-[#0e2c56]" />
      </div>
    </footer>
  );
}

/* ---------- page ---------- */

const MENU = ["File", "Edit", "View", "Insert", "Instrument", "Tools", "Options", "Window", "Help"];

export default function App() {
  return (
    <div className="flex h-screen w-full flex-col overflow-hidden bg-[#f0f0f0] font-['Liberation_Sans',Arial,sans-serif]">
      <header className={clsx("flex h-[22px] shrink-0 items-center bg-linear-to-r from-[#0c4597] via-[#14519f] to-[#3d76b2]", SEGOE)}>
        <BookFlask size={17} />
        <h1 className="rounded-full bg-[#8fb0dc]/60 pr-2 pl-1 text-xs leading-4 text-black shadow-[0_0_6px_2px_rgb(143_176_220/0.6)]">TOC-L Sample Table Editor</h1>
        <div className="mr-[3px] ml-auto flex h-[18px] self-start rounded-b-[4px] border border-t-0 border-[#8fb2d8]">
          <button aria-label="Minimize" className="flex w-[28px] items-center justify-center"><svg width="12" height="10" viewBox="0 0 12 10"><path d="M1 5h10v3.500H1z" fill="#fff" stroke="#444" strokeWidth=".8" /></svg></button>
          <button aria-label="Restore" className="flex w-[27px] items-center justify-center border-x border-[#8fb2d8]"><svg width="12" height="12" viewBox="0 0 12 12" fill="none" stroke="#fff" strokeWidth="1.400"><path d="M4 3V1.500h7V8H9.500M1.500 4h7v6.500h-7zM4 6.500h2v1.500H4z" /></svg></button>
          <button aria-label="Close" className="flex w-[48px] items-center justify-center"><svg width="12" height="10" viewBox="0 0 12 10" fill="#fff" stroke="#444" strokeWidth=".6"><path d="M1 1h3l2 2.300L8 1h3L7.800 5 11 9H8L6 6.700 4 9H1l3.200-4z" /></svg></button>
        </div>
      </header>

      <div className="flex h-12 shrink-0 items-start border-t-4 border-white bg-linear-to-b from-[#7b8388] via-[#3f474f] via-80% to-[#555d65] to-82% pt-[1px] pl-[3px] shadow-[0_-1px_0_#123c78]">
        <ToolButton name="New" /><ToolButton name="Open" /><ToolButton name="Save" /><ToolButton name="Print" arrow /><ToolButton name="Preview" arrow />
        <div className="flex-1" />
        <ToolButton name="Connect" dim /><ToolButton name="Start" dim /><ToolButton name="Stop" arrow /><ToolButton name="Shutdown" dim /><ToolButton name="Monitor" dim />
        <button className="mt-[2px] mr-[11px] ml-[10px] h-8 w-[76px] rounded-full border-2 border-t-[#0c2766] border-r-[#8ba6e4] border-b-[#8ba6e4] border-l-[#0c2766] bg-linear-to-b from-[#123f9c] to-[#3464c8] text-sm text-white">Run</button>
      </div>

      <nav className={clsx("flex h-7 shrink-0 items-center gap-2 border-b-2 border-l-2 border-b-[#a0a0a0] border-l-[#555d65] pt-[3px] pl-3 text-xs text-black", SEGOE)}>
        {MENU.map((m) => {
          const k = m === "Instrument" ? 1 : 0;
          return <button key={m}>{m.slice(0, k)}<span className="underline underline-offset-2">{m[k]}</span>{m.slice(k + 1)}</button>;
        })}
      </nav>

      <main className="flex min-h-0 flex-1">
        <aside className="flex w-[275px] shrink-0 flex-col border-r-2 border-[#808080]">
          <SampleTableDock />
          <StatusDock />
        </aside>
        <div className="relative flex-1 overflow-hidden border-r-2 border-[#e8eef6] bg-[#ababab]">
          <BackWindow />
          <MainWindow />
          <CalDialog />
        </div>
      </main>

      <div className={clsx("flex h-[21px] shrink-0 items-center justify-end gap-[3px] border-t-2 border-white pr-[1px] text-xs text-black", SEGOE)}>
        <span className="flex h-4 w-[99px] items-center border-t border-l border-[#999] pl-[1px]">Annamari</span>
        <span className="h-4 w-[28px] border-t border-l border-[#999]" />
        <span className="flex h-4 w-[33px] items-center border-t border-l border-[#999] pl-[1px]">NUM</span>
        <span className="h-4 w-[33px] border-t border-l border-[#999]" />
      </div>
      <Taskbar />
    </div>
  );
}
